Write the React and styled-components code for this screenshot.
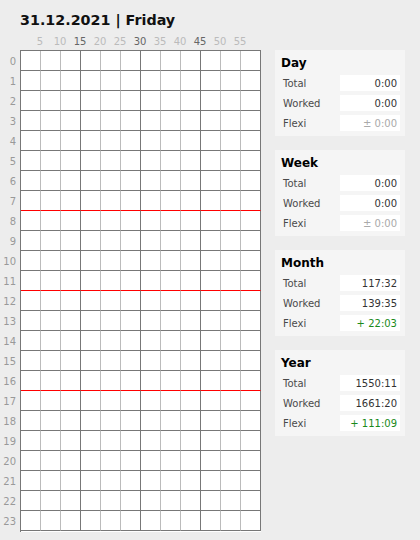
import React from "react";
import styled, { createGlobalStyle } from "styled-components";

const GlobalStyle = createGlobalStyle`
  body {
    margin: 0;
    background: #ededed;
    font-family: "DejaVu Sans", Verdana, sans-serif;
  }
`;

const Page = styled.div`
  display: flex;
  align-items: flex-start;
  gap: 14px;
  width: 420px;
  height: 540px;
  box-sizing: border-box;
`;

const LeftColumn = styled.div`
  display: flex;
  flex-direction: column;
`;

const Title = styled.h1`
  margin: 10px 0 0 20px;
  font-size: 14.3px;
  line-height: 20px;
  font-weight: bold;
  color: #111;
`;

const Ruler = styled.div`
  display: flex;
  height: 20px;
  padding-left: 30px;
  align-items: flex-end;
`;

const Minute = styled.span`
  width: 20px;
  text-align: center;
  font-size: 10px;
  line-height: 12px;
  padding-bottom: 2px;
  color: ${(p) => (p.$major ? "#666" : "#bbb")};
`;

const Body = styled.div`
  display: flex;
`;

const Hours = styled.div`
  display: flex;
  flex-direction: column;
  width: 20px;
  padding-top: 2px;
`;

const Hour = styled.span`
  height: 20px;
  line-height: 20px;
  padding-right: 4px;
  text-align: right;
  font-size: 10px;
  color: #999;
`;

const Grid = styled.div`
  display: grid;
  grid-template-columns: repeat(12, 20px);
  grid-auto-rows: 20px;
  border-left: 1px solid #777;
  border-top: 1px solid #777;
  background: #fff;
`;

const Cell = styled.div`
  border-right: 1px solid ${(p) => (p.$major ? "#777" : "#bbb")};
  border-bottom: 1px solid ${(p) => (p.$mark ? "#f00" : "#777")};
`;

const Sidebar = styled.div`
  display: flex;
  flex-direction: column;
  gap: 14px;
  margin-top: 50px;
`;

const Panel = styled.section`
  width: 130px;
  box-sizing: border-box;
  padding: 0 5px 5px 6px;
  background: #f5f5f5;
`;

const PanelTitle = styled.h2`
  margin: 0;
  height: 25px;
  line-height: 26px;
  font-size: 12px;
  font-weight: bold;
  color: #000;
`;

const Rows = styled.div`
  display: flex;
  flex-direction: column;
  gap: 4px;
`;

const Row = styled.div`
  display: flex;
  justify-content: space-between;
  align-items: flex-start;
  height: 16px;
  font-size: 10px;
  line-height: 17px;
`;

const Label = styled.span`
  padding-left: 2px;
  color: #4a4a4a;
`;

const Value = styled.span`
  width: 60px;
  height: 16px;
  box-sizing: border-box;
  padding-right: 3px;
  background: #fff;
  text-align: right;
  color: ${(p) => p.$color || "#333"};
`;

const minutes = [5, 10, 15, 20, 25, 30, 35, 40, 45, 50, 55];
const marks = [7, 11, 16];

const summaries = [
  { title: "Day", total: "0:00", worked: "0:00", flexi: "± 0:00" },
  { title: "Week", total: "0:00", worked: "0:00", flexi: "± 0:00" },
  { title: "Month", total: "117:32", worked: "139:35", flexi: "+ 22:03" },
  { title: "Year", total: "1550:11", worked: "1661:20", flexi: "+ 111:09" },
];

function flexiColor(v) {
  if (v.startsWith("+")) return "#1a8a1a";
  if (v.startsWith("-")) return "#c00";
  return "#aaa";
}

function App() {
  const hours = Array.from({ length: 24 }, (_, i) => i);

  return (
    <Page>
      <GlobalStyle />
      <LeftColumn>
        <Title>31.12.2021 | Friday</Title>
        <Ruler>
          {minutes.map((m) => (
            <Minute key={m} $major={m % 15 === 0}>
              {m}
            </Minute>
          ))}
        </Ruler>
        <Body>
          <Hours>
            {hours.map((h) => (
              <Hour key={h}>{h}</Hour>
            ))}
          </Hours>
          <Grid>
            {hours.map((h) =>
              Array.from({ length: 12 }, (_, c) => (
                <Cell
                  key={h + "-" + c}
                  $major={(c + 1) % 3 === 0}
                  $mark={marks.includes(h)}
                />
              ))
            )}
          </Grid>
        </Body>
      </LeftColumn>
      <Sidebar>
        {summaries.map((s) => (
          <Panel key={s.title}>
            <PanelTitle>{s.title}</PanelTitle>
            <Rows>
              <Row>
                <Label>Total</Label>
                <Value>{s.total}</Value>
              </Row>
              <Row>
                <Label>Worked</Label>
                <Value>{s.worked}</Value>
              </Row>
              <Row>
                <Label>Flexi</Label>
                <Value $color={flexiColor(s.flexi)}>{s.flexi}</Value>
              </Row>
            </Rows>
          </Panel>
        ))}
      </Sidebar>
    </Page>
  );
}

export default App;
